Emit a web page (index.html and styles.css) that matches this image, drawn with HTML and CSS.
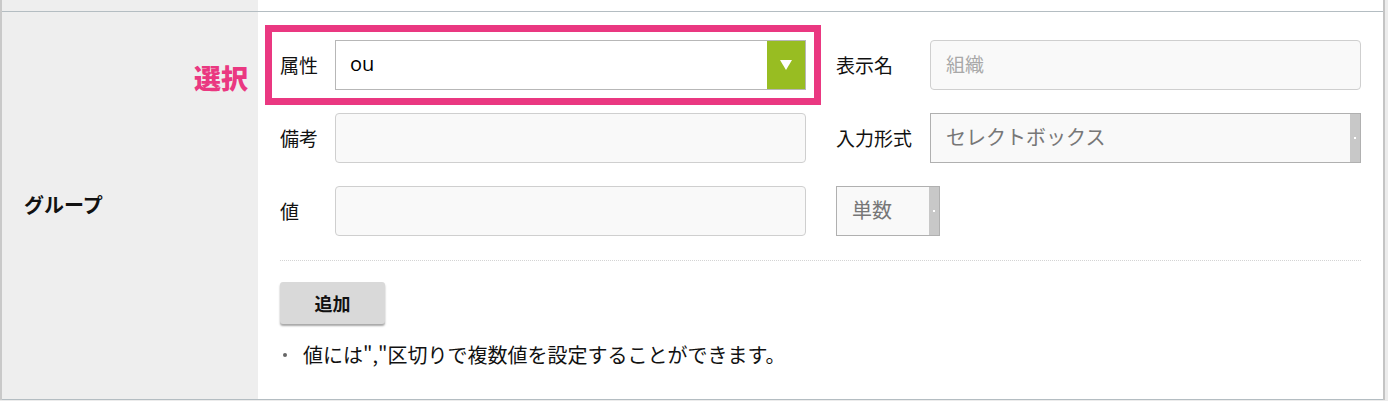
FILE: index.html
```html
<!DOCTYPE html>
<html lang="ja">
<head>
    <meta charset="UTF-8">
    <meta name="viewport" content="width=device-width, initial-scale=1.0">
    <title>属性設定</title>
    <link rel="stylesheet" href="styles.css">
</head>
<body>
    <div class="table">
        <div class="row row-prev">
            <div class="cell-head"></div>
            <div class="cell-body"></div>
        </div>
        <div class="row">
            <div class="cell-head">
                <span class="head-label">グループ</span>
            </div>
            <div class="cell-body">
                <div class="form-grid">
                    <div class="field picked">
                        <span class="pick-note">選択</span>
                        <label class="field-label">属性</label>
                        <div class="select-box">
                            <span class="select-text">ou</span>
                            <span class="select-btn"></span>
                        </div>
                    </div>
                    <div class="field wide-label">
                        <label class="field-label">表示名</label>
                        <div class="text-box muted">組織</div>
                    </div>
                    <div class="field">
                        <label class="field-label">備考</label>
                        <div class="text-box"></div>
                    </div>
                    <div class="field wide-label">
                        <label class="field-label">入力形式</label>
                        <div class="plain-select">
                            <span class="plain-text">セレクトボックス</span>
                            <span class="plain-arrow"></span>
                        </div>
                    </div>
                    <div class="field">
                        <label class="field-label">値</label>
                        <div class="text-box"></div>
                    </div>
                    <div class="field">
                        <div class="plain-select small">
                            <span class="plain-text">単数</span>
                            <span class="plain-arrow"></span>
                        </div>
                    </div>
                </div>
                <div class="divider"></div>
                <button class="btn-add" type="button">追加</button>
                <ul class="notes">
                    <li>値には","区切りで複数値を設定することができます。</li>
                </ul>
            </div>
        </div>
    </div>
</body>
</html>
```

FILE: styles.css
```css
:root{
    --pink: #ea3881;
    --green: #98bd22;
    --line: #b4bdc2;
    --head-bg: #eeeeee;
}
*,*::before,*::after{
    box-sizing: border-box;
    margin: 0;
    padding: 0;
}
body{
    background-color: #ececec;
    font-family: "Noto Sans CJK JP", "Noto Sans", sans-serif;
    color: #111;
    font-size: 19px;
    line-height: 28px;
}
.table{
    width: 1385px;
    border-left: 2px solid #c9c9c9;
    border-right: 2px solid #c4c4c4;
    background-color: #fff;
}
.row{
    display: flex;
    border-bottom: 1px solid var(--line);
}
.row-prev{
    height: 12px;
}
.cell-head{
    width: 256px;
    flex-shrink: 0;
    background-color: var(--head-bg);
    display: flex;
    align-items: center;
    padding-left: 22px;
}
.head-label{
    font-weight: 700;
    font-size: 20px;
    padding-bottom: 2px;
}
.cell-body{
    flex: 1;
    padding: 28px 22px 30px 22px;
}
.form-grid{
    display: grid;
    grid-template-columns: 526px 525px;
    column-gap: 30px;
    row-gap: 23px;
}
.field{
    display: flex;
    align-items: center;
    height: 50px;
    position: relative;
}
.field-label{
    width: 55px;
    flex-shrink: 0;
}
.wide-label .field-label{
    width: 94px;
}
.picked{
    outline: 7px solid var(--pink);
    outline-offset: 8px;
}
.pick-note{
    position: absolute;
    right: calc(100% + 32px);
    top: 24px;
    color: var(--pink);
    font-size: 27px;
    font-weight: 900;
    line-height: 28px;
    white-space: nowrap;
}
.select-box{
    flex: 1;
    height: 50px;
    display: flex;
    border: 1px solid #b7b7b7;
    background-color: #fff;
}
.select-text{
    flex: 1;
    padding-left: 14px;
    line-height: 46px;
    font-family: "Open Sans", "Noto Sans", sans-serif;
    font-size: 20px;
    color: #000;
}
.select-btn{
    width: 38px;
    background-color: var(--green);
    display: flex;
    align-items: center;
    justify-content: center;
}
.select-btn::before{
    content: "";
    border-left: 6px solid transparent;
    border-right: 6px solid transparent;
    border-top: 10px solid #fff;
}
.text-box{
    flex: 1;
    height: 50px;
    border: 1px solid #cfcfcf;
    border-radius: 4px;
    background-color: #f9f9f9;
    padding-left: 15px;
    line-height: 46px;
}
.text-box.muted{
    color: #a8a8a8;
}
.plain-select{
    flex: 1;
    height: 50px;
    display: flex;
    border: 1px solid #b0b0b0;
    background-color: #f9f9f9;
}
.plain-select.small{
    flex: 0 0 104px;
}
.plain-text{
    flex: 1;
    padding-left: 15px;
    line-height: 46px;
    color: #777;
    font-size: 20px;
    white-space: nowrap;
}
.plain-arrow{
    width: 10px;
    background-color: #c8c8c8;
    display: flex;
    align-items: center;
    justify-content: center;
}
.plain-arrow::before{
    content: "";
    width: 2px;
    height: 2px;
    background-color: #fff;
}
.divider{
    margin-top: 24px;
    border-top: 1px dotted #d4d4d4;
}
.btn-add{
    display: block;
    margin-top: 21px;
    width: 105px;
    height: 42px;
    border: none;
    border-radius: 3px;
    background-color: #d9d9d9;
    box-shadow: 0 2px 2px rgba(0,0,0,0.35);
    font-family: inherit;
    font-size: 18px;
    font-weight: 700;
    color: #111;
}
.notes{
    list-style: none;
    margin-top: 17px;
    font-size: 20px;
}
.notes li{
    display: flex;
    align-items: center;
    gap: 16px;
    padding-left: 3px;
}
.notes li::before{
    content: "";
    width: 4px;
    height: 4px;
    border-radius: 50%;
    background-color: #666;
}
```
